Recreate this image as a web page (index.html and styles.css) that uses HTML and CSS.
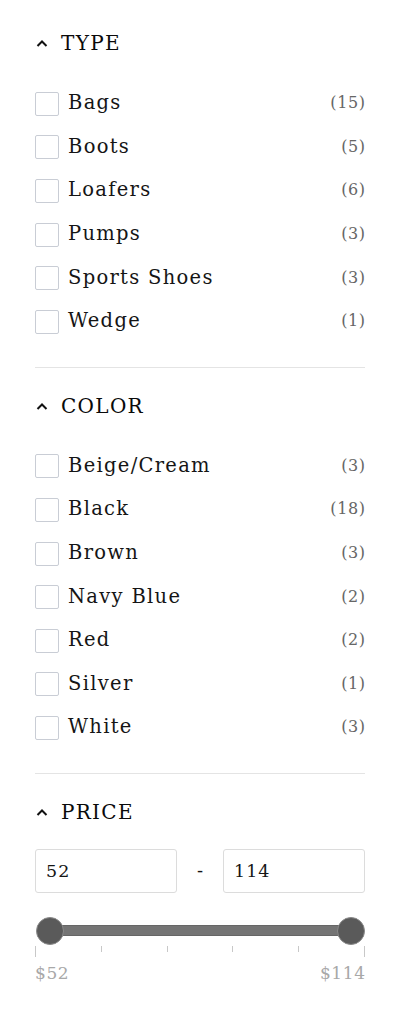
FILE: index.html
```html
<!DOCTYPE html>
<html lang="en">
<head>
  <meta charset="UTF-8">
  <title>Filters</title>
  <link rel="stylesheet" href="styles.css">
</head>
<body>

<div id="filters">
  <!-- type -->
  <div class="section">
    <div class="section-head">
      <svg class="chev" width="12" height="8" viewBox="0 0 12 8"><path d="M1.5 7 L6 2.5 L10.5 7" fill="none" stroke="#111" stroke-width="2"/></svg>
      <span>TYPE</span>
    </div>
    <div class="options">
      <label class="opt"><input type="checkbox"><span class="name">Bags</span><span class="count">(15)</span></label>
      <label class="opt"><input type="checkbox"><span class="name">Boots</span><span class="count">(5)</span></label>
      <label class="opt"><input type="checkbox"><span class="name">Loafers</span><span class="count">(6)</span></label>
      <label class="opt"><input type="checkbox"><span class="name">Pumps</span><span class="count">(3)</span></label>
      <label class="opt"><input type="checkbox"><span class="name">Sports Shoes</span><span class="count">(3)</span></label>
      <label class="opt"><input type="checkbox"><span class="name">Wedge</span><span class="count">(1)</span></label>
    </div>
  </div>

  <!-- color -->
  <div class="section">
    <div class="section-head">
      <svg class="chev" width="12" height="8" viewBox="0 0 12 8"><path d="M1.5 7 L6 2.5 L10.5 7" fill="none" stroke="#111" stroke-width="2"/></svg>
      <span>COLOR</span>
    </div>
    <div class="options">
      <label class="opt"><input type="checkbox"><span class="name">Beige/Cream</span><span class="count">(3)</span></label>
      <label class="opt"><input type="checkbox"><span class="name">Black</span><span class="count">(18)</span></label>
      <label class="opt"><input type="checkbox"><span class="name">Brown</span><span class="count">(3)</span></label>
      <label class="opt"><input type="checkbox"><span class="name">Navy Blue</span><span class="count">(2)</span></label>
      <label class="opt"><input type="checkbox"><span class="name">Red</span><span class="count">(2)</span></label>
      <label class="opt"><input type="checkbox"><span class="name">Silver</span><span class="count">(1)</span></label>
      <label class="opt"><input type="checkbox"><span class="name">White</span><span class="count">(3)</span></label>
    </div>
  </div>

  <!-- price -->
  <div class="section last">
    <div class="section-head">
      <svg class="chev" width="12" height="8" viewBox="0 0 12 8"><path d="M1.5 7 L6 2.5 L10.5 7" fill="none" stroke="#111" stroke-width="2"/></svg>
      <span>PRICE</span>
    </div>
    <div class="price-inputs">
      <input type="text" value="52">
      <span class="dash">-</span>
      <input type="text" value="114">
    </div>
    <div class="slider">
      <span class="thumb"></span>
      <span class="bar"></span>
      <span class="thumb"></span>
    </div>
    <div class="ticks">
      <span class="tick end"></span>
      <span class="tick"></span>
      <span class="tick"></span>
      <span class="tick"></span>
      <span class="tick"></span>
      <span class="tick end"></span>
    </div>
    <div class="price-labels">
      <span>$52</span>
      <span>$114</span>
    </div>
  </div>
</div>

</body>
</html>
```

FILE: styles.css
```css
body {
  margin: 0;
  background: #fff;
  font-family: "DejaVu Serif", "Liberation Serif", serif;
  color: #151515;
}
#filters {
  padding: 31px 35px 0 35px;
}
.section {
  border-bottom: 1px solid #e4e4e4;
  padding-bottom: 24px;
  margin-bottom: 26px;
}
.section.last {
  border-bottom: none;
}
.section-head {
  display: flex;
  align-items: center;
  height: 24px;
  font-size: 20px;
  letter-spacing: 1.3px;
  color: #0a0a0a;
}
.chev {
  margin: 0 13px 0 1px;
}
.options {
  margin-top: 26px;
}
.opt {
  display: flex;
  align-items: center;
  height: 43.6px;
}
.opt input {
  appearance: none;
  -webkit-appearance: none;
  margin: 0 9px 0 0;
  width: 24px;
  height: 24px;
  border: 1.5px solid #c9cdd5;
  border-radius: 2px;
  box-sizing: border-box;
  position: relative;
  top: 1px;
}
.name {
  flex: 1;
  font-size: 19.5px;
  letter-spacing: 1.3px;
}
.count {
  font-size: 16px;
  color: #666;
  letter-spacing: 0.6px;
  margin-right: -0.6px;
}
.price-inputs {
  display: flex;
  align-items: center;
  margin-top: 25px;
}
.price-inputs input {
  width: 142px;
  height: 44px;
  box-sizing: border-box;
  border: 1px solid #dcdcdc;
  border-radius: 3px;
  padding: 0 10px;
  font-family: "DejaVu Serif", "Liberation Serif", serif;
  font-size: 17.5px;
  letter-spacing: 1px;
  color: #151515;
}
.dash {
  flex: 1;
  text-align: center;
  font-size: 18px;
}
.slider {
  display: flex;
  align-items: center;
  margin-top: 24px;
}
.thumb {
  width: 28px;
  height: 28px;
  border-radius: 50%;
  background: #5a5a5a;
  border: 1px solid #8a8a8a;
  box-sizing: border-box;
  position: relative;
  z-index: 1;
  flex: none;
}
.thumb:first-child {
  margin-left: 1px;
}
.bar {
  flex: 1;
  height: 11px;
  background: #747474;
  border: 1px solid #666;
  box-sizing: border-box;
  margin: 0 -2px;
}
.ticks {
  display: flex;
  justify-content: space-between;
  align-items: flex-start;
  margin-top: 1px;
}
.tick {
  width: 1px;
  height: 6px;
  background: #c8c8c8;
}
.tick.end {
  height: 11px;
}
.price-labels {
  display: flex;
  justify-content: space-between;
  margin-top: 6px;
  font-size: 17px;
  color: #a8a8a8;
  letter-spacing: 0.6px;
}
.price-labels span:last-child {
  margin-right: -0.6px;
}
```
